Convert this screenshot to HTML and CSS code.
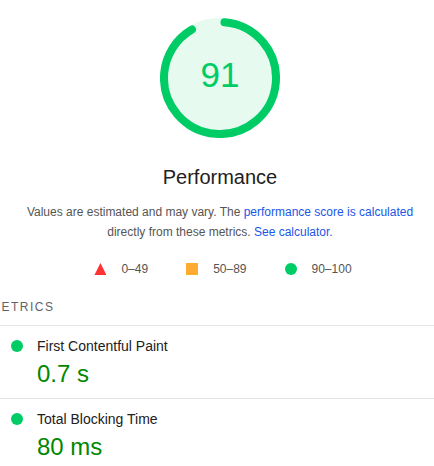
FILE: index.html
```html
<!DOCTYPE html>
<html lang="en">
<head>
  <meta charset="UTF-8">
  <meta name="viewport" content="width=device-width, initial-scale=1.0">
  <title>Performance</title>
  <link rel="stylesheet" href="styles.css">
</head>
<body>
  <!-- Score summary -->
  <div class="summary">
    <svg class="gauge" viewBox="0 0 120 120" width="120" height="120">
      <circle class="gauge-base" cx="60" cy="60" r="56"></circle>
      <circle class="gauge-arc" cx="60" cy="60" r="56"></circle>
      <text class="gauge-score" x="60" y="69">91</text>
    </svg>
    <div class="summary-title">Performance</div>
    <p class="summary-desc">
      Values are estimated and may vary. The <a href="#">performance score is calculated</a>
      directly from these metrics. <a href="#">See calculator.</a>
    </p>
    <div class="legend">
      <div class="legend-item"><span class="shape fail"></span>0–49</div>
      <div class="legend-item"><span class="shape average"></span>50–89</div>
      <div class="legend-item"><span class="shape pass"></span>90–100</div>
    </div>
  </div>

  <!-- Metrics list -->
  <div class="metrics">
    <div class="metrics-header">Metrics</div>
    <div class="metric">
      <span class="dot"></span>
      <span class="metric-title">First Contentful Paint</span>
      <span class="metric-value">0.7 s</span>
    </div>
    <div class="metric">
      <span class="dot"></span>
      <span class="metric-title">Total Blocking Time</span>
      <span class="metric-value">80 ms</span>
    </div>
  </div>
</body>
</html>
```

FILE: styles.css
```css
body {
  font-family: 'Liberation Sans', Arial, sans-serif;
  background-color: #fff;
  color: #212121;
  margin: 0;
  overflow: hidden;
}
.summary {
  padding: 18px 0 0 6px;
  text-align: center;
}
.gauge {
  display: block;
  margin: 0 auto;
}
.gauge-base {
  fill: #e6faf0;
  stroke: #e6faf0;
  stroke-width: 8;
}
.gauge-arc {
  fill: none;
  stroke: #00cc66;
  stroke-width: 8;
  stroke-linecap: round;
  stroke-dasharray: 317.5 351.9;
  transform: rotate(-85.4deg);
  transform-origin: 60px 60px;
}
.gauge-score {
  font-family: 'Liberation Sans', Arial, sans-serif;
  font-size: 35px;
  fill: #00cc66;
  text-anchor: middle;
}
.summary-title {
  margin-top: 27px;
  font-size: 20px;
  line-height: 24px;
  color: #212121;
}
.summary-desc {
  max-width: 400px;
  margin: 13px auto 0;
  font-size: 12px;
  line-height: 20px;
  color: #555;
}
.summary-desc a {
  color: #1a56e8;
  text-decoration: none;
}
.legend {
  display: flex;
  justify-content: center;
  gap: 38px;
  margin-top: 17px;
  padding-left: 6px;
  font-size: 12px;
  line-height: 20px;
  color: #555;
}
.legend-item {
  display: flex;
  align-items: center;
  gap: 15px;
}
.shape {
  width: 12px;
  height: 12px;
}
.shape.fail {
  background-color: #ff3333;
  clip-path: polygon(50% 0, 100% 100%, 0 100%);
}
.shape.average {
  background-color: #ffaa33;
}
.shape.pass {
  background-color: #00cc66;
  border-radius: 50%;
}
.metrics-header {
  margin: 18px 0 8px -10px;
  font-size: 12px;
  line-height: 20px;
  letter-spacing: 1.5px;
  text-transform: uppercase;
  color: #5f6368;
}
.metric {
  display: grid;
  grid-template-columns: 12px 1fr;
  column-gap: 14px;
  padding: 10px 0 9px 11px;
  border-top: 1px solid #e4e4e4;
}
.dot {
  width: 12px;
  height: 12px;
  border-radius: 50%;
  background-color: #00cc66;
  align-self: center;
}
.metric-title {
  font-size: 14px;
  line-height: 20px;
  color: #212121;
}
.metric-value {
  grid-column: 2;
  margin-top: 3px;
  font-size: 24px;
  line-height: 30px;
  color: #008800;
}
```
